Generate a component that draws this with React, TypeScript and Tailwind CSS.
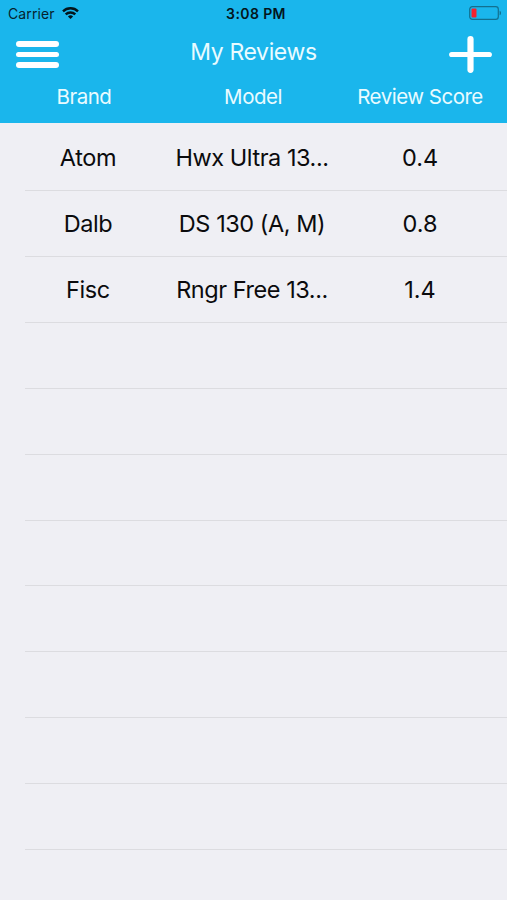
import React from 'react';

interface Review {
  brand: string;
  model: string;
  score: string;
}

const reviews: Review[] = [
  { brand: 'Atom', model: 'Hwx Ultra 13...', score: '0.4' },
  { brand: 'Dalb', model: 'DS 130 (A, M)', score: '0.8' },
  { brand: 'Fisc', model: 'Rngr Free 13...', score: '1.4' },
];

const EMPTY_ROWS = 8;

function StatusBar() {
  return (
    <div className="grid h-7 grid-cols-[1fr_auto_1fr] items-center pl-2 pr-[5px] text-[14px] leading-none text-[#06232e]">
      <div className="flex items-center gap-[7px]">
        <span className="pb-px tracking-[0.1px]">Carrier</span>
        <svg className="mb-[2px]" width="17" height="12" viewBox="0 0 17 12" fill="none" stroke="#03151c" strokeWidth="2.4">
          <path d="M1 4.3a10.8 10.8 0 0 1 15 0" />
          <path d="M3.7 7.4a6.9 6.9 0 0 1 9.6 0" />
          <path d="M8.5 12 5.9 9.5a3.7 3.7 0 0 1 5.2 0Z" fill="#03151c" stroke="none" />
        </svg>
      </div>
      <span className="pb-px pl-0.5 font-semibold tracking-[0.4px] text-[#03151c]">3:08 PM</span>
      <svg className="mb-[2px] justify-self-end" width="33" height="14" viewBox="0 0 33 14">
        <rect x="0.7" y="0.7" width="28.6" height="12.6" rx="2.6" fill="none" stroke="#12708f" strokeWidth="1.2" />
        <rect x="2.5" y="2.5" width="5" height="9" rx="1" fill="#f5222d" />
        <path d="M30.6 4.7c1.9.7 1.9 3.9 0 4.6Z" fill="#12708f" />
      </svg>
    </div>
  );
}

function Header() {
  return (
    <header className="h-[123px] shrink-0 bg-[#1ab6ec] text-[#e9fbff]">
      <StatusBar />
      <div className="flex h-[52px] items-center justify-between pl-4 pr-[15px] pt-px">
        <button aria-label="Menu" className="flex w-[43px] flex-col gap-[5px]">
          <span className="h-[5.5px] w-full rounded-full bg-white" />
          <span className="h-[5.5px] w-full rounded-full bg-white" />
          <span className="h-[5.5px] w-full rounded-full bg-white" />
        </button>
        <h1 className="pb-[5px] pr-px text-[23px] leading-7 tracking-[-0.38px]">My Reviews</h1>
        <button aria-label="Add review">
          <svg width="43" height="37" viewBox="0 0 43 37" stroke="#fff" strokeLinecap="round">
            <path d="M2.7 18.5h37.6" strokeWidth="5.2" />
            <path d="M21.5 3.2v30.6" strokeWidth="6.2" />
          </svg>
        </button>
      </div>
      <div className="grid h-[34px] grid-cols-[168px_170px_164px] items-center text-center text-[20.5px] leading-6 tracking-[-0.5px]">
        <span>Brand</span>
        <span>Model</span>
        <span>Review Score</span>
      </div>
    </header>
  );
}

function ReviewRow({ review }: { review?: Review }) {
  return (
    <li className="ml-[25px] h-[65.93px] shrink-0 border-b border-[#dcdce0]">
      {review && (
        <div className="grid h-full grid-cols-[126px_202px_134px] items-center pt-0.5 text-center text-[23.5px] leading-7">
          <span className="tracking-[-0.4px]">{review.brand}</span>
          <span className="tracking-[-0.45px]">{review.model}</span>
          <span>{review.score}</span>
        </div>
      )}
    </li>
  );
}

export default function App() {
  return (
    <div className="flex h-[900px] w-[507px] flex-col overflow-hidden bg-[#efeff4] font-['Inter',sans-serif] text-[#0b0b0d]">
      <Header />
      <ul className="flex flex-col pt-[2px]">
        {reviews.map((review) => (
          <ReviewRow key={review.brand} review={review} />
        ))}
        {Array.from({ length: EMPTY_ROWS }, (_, i) => (
          <ReviewRow key={i} />
        ))}
      </ul>
    </div>
  );
}
